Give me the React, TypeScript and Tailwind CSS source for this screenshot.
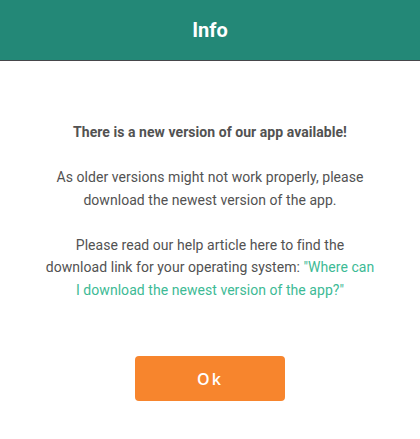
export default function App() {
  return (
    <div className="w-[420px] h-[439px] bg-white flex flex-col font-['Roboto',sans-serif]">
      <header className="h-[61px] bg-[#238877] border-b border-[#46464a] flex items-center justify-center">
        <h1 className="text-white text-[20px] font-bold">Info</h1>
      </header>

      <div className="px-[45px] pt-[60px] text-center text-[14px] leading-[22.5px] tracking-[0.05px] text-[#525252]">
        <p className="font-bold">There is a new version of our app available!</p>
        <p className="mt-[22.5px]">
          As older versions might not work properly, please download the newest version of the app.
        </p>
        <p className="mt-[22.5px]">
          Please read our help article here to find the download link for your operating system:{' '}
          <a href="#" className="text-[#3dba95]">
            "Where can I download the newest version of the app?"
          </a>
        </p>
      </div>

      <div className="flex justify-center pt-[55px]">
        <button className="w-[150px] h-[45px] rounded-[4px] bg-[#f7852d] text-white text-[16px] font-semibold tracking-[2px] font-['Open_Sans',sans-serif]">
          Ok
        </button>
      </div>
    </div>
  );
}
